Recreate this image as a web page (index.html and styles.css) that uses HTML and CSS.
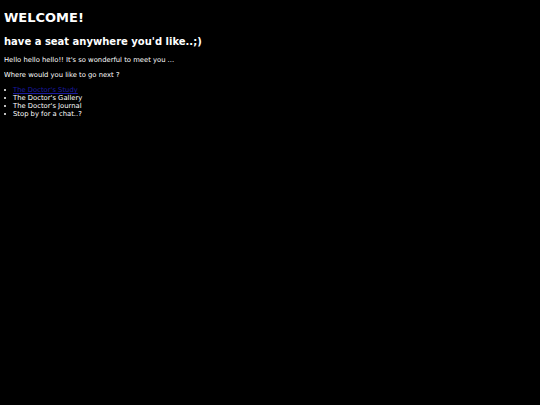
FILE: index.html
```html
<!DOCTYPE html>
<html>
<head>
<meta charset="utf-8">
<link rel="stylesheet" href="styles.css">
</head>
<body class="page">
<h1 class="title">WELCOME!</h1>
<h2 class="subtitle">have a seat anywhere you'd like..;)</h2>
<p class="text">Hello hello hello!! It's so wonderful to meet you ...</p>
<p class="text">Where would you like to go next ?</p>
<ul class="menu">
<li class="item"><a class="link" href="#">The Doctor's Study</a></li>
<li class="item">The Doctor's Gallery</li>
<li class="item">The Doctor's Journal</li>
<li class="item">Stop by for a chat..?</li>
</ul>
</body>
</html>
```
FILE: styles.css
```css
html { background: #000; }
.page {
  margin: 4px;
  background: #000;
  color: #fff;
  font-family: "DejaVu Sans", sans-serif;
  font-size: 6.8px;
}
.title {
  font-size: 13px;
  font-weight: bold;
  margin: 6px 0 11px;
  line-height: 15px;
}
.subtitle {
  font-size: 10px;
  font-weight: bold;
  margin: 0 0 8px;
  line-height: 12px;
}
.text {
  margin: 0 0 7px;
  line-height: 8px;
}
.menu {
  margin: 0;
  padding: 0;
  list-style: none;
}
.item {
  line-height: 8px;
  position: relative;
  padding-left: 9px;
}
.item::before {
  content: "";
  position: absolute;
  left: 0;
  top: 3px;
  width: 2px;
  height: 2px;
  border-radius: 1px;
  background: #fff;
}
.link { color: #1a1aa0; }
```
